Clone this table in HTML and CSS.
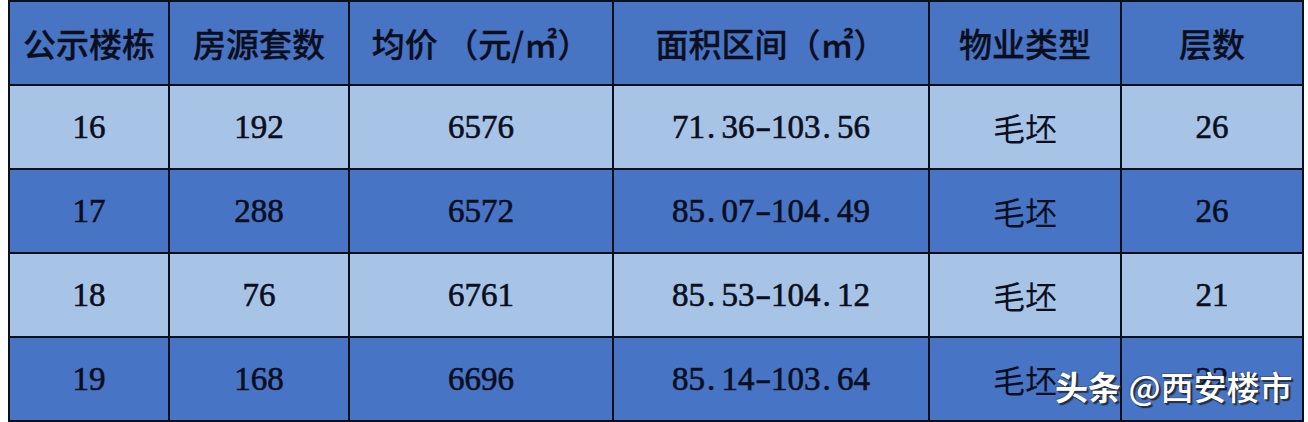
FILE: index.html
```html
<!DOCTYPE html>
<html lang="zh-CN">
<head>
<meta charset="utf-8">
<title>公示楼栋</title>
<link rel="stylesheet" href="styles.css">
</head>
<body>
<div class="wrap">
<table class="grid">
  <colgroup>
    <col class="c1"><col class="c2"><col class="c3"><col class="c4"><col class="c5"><col class="c6">
  </colgroup>
  <thead>
    <tr class="head">
      <th>公示楼栋</th>
      <th>房源套数</th>
      <th>均价 （元/㎡）</th>
      <th>面积区间（㎡）</th>
      <th>物业类型</th>
      <th>层数</th>
    </tr>
  </thead>
  <tbody>
    <tr class="light">
      <td class="num">16</td><td class="num">192</td><td class="num">6576</td>
      <td class="area">71<span class="p">.</span>36<span class="h">-</span>103<span class="p">.</span>56</td>
      <td class="cjk">毛坯</td><td class="num">26</td>
    </tr>
    <tr class="dark">
      <td class="num">17</td><td class="num">288</td><td class="num">6572</td>
      <td class="area">85<span class="p">.</span>07<span class="h">-</span>104<span class="p">.</span>49</td>
      <td class="cjk">毛坯</td><td class="num">26</td>
    </tr>
    <tr class="light">
      <td class="num">18</td><td class="num">76</td><td class="num">6761</td>
      <td class="area">85<span class="p">.</span>53<span class="h">-</span>104<span class="p">.</span>12</td>
      <td class="cjk">毛坯</td><td class="num">21</td>
    </tr>
    <tr class="dark">
      <td class="num">19</td><td class="num">168</td><td class="num">6696</td>
      <td class="area">85<span class="p">.</span>14<span class="h">-</span>103<span class="p">.</span>64</td>
      <td class="cjk">毛坯</td><td class="num">22</td>
    </tr>
  </tbody>
</table>
<div class="watermark"><span class="wm-a">头条</span> <span class="wm-b">@西安楼市</span></div>
</div>
</body>
</html>
```

FILE: styles.css
```css
html, body {
  margin: 0;
  padding: 0;
  background: #ffffff;
}
body {
  padding-left: 8px;
}
.wrap {
  position: relative;
  width: 1294px;
}
.grid {
  border-collapse: collapse;
  table-layout: fixed;
  width: 1294px;
  border: 2px solid #0d0f18;
}
.c1 { width: 160px; }
.c2 { width: 180px; }
.c3 { width: 264px; }
.c4 { width: 316px; }
.c5 { width: 192px; }
.c6 { width: 182px; }
.grid th, .grid td {
  border: 2px solid #0d0f18;
  height: 82px;
  padding: 0;
  text-align: center;
  vertical-align: middle;
  color: #0b0e1c;
}
.head th {
  background: #4874c4;
  font-family: "Noto Sans CJK SC", "Noto Sans", sans-serif;
  font-weight: 500;
  font-size: 33px;
  line-height: 1;
  -webkit-text-stroke: 0.3px #0b0e1c;
}
.light td { background: #a7c4e7; }
.dark td { background: #4774c4; }
.num, .area {
  font-family: "Liberation Serif", "DejaVu Serif", serif;
  font-size: 33px;
  line-height: 1;
  white-space: nowrap;
  -webkit-text-stroke: 0.6px #0b0e1c;
}
.area .p {
  display: inline-block;
  width: 0.5em;
  text-align: left;
  padding-left: 0.06em;
  box-sizing: border-box;
}
.area .h {
  display: inline-block;
  width: 0.5em;
  text-align: center;
  transform: scaleX(1.45);
}
.cjk {
  font-family: "Noto Sans CJK SC", "Noto Sans", sans-serif;
  font-size: 32px;
  font-weight: 400;
  line-height: 1;
}
.watermark {
  position: absolute;
  left: 1047px;
  top: 370px;
  font-family: "Noto Sans CJK SC", "Noto Sans", sans-serif;
  font-size: 33px;
  line-height: 1;
  color: #ffffff;
  white-space: nowrap;
  text-shadow: 1px 1px 0 #2e3340, 2px 2px 1px rgba(20, 24, 36, 0.8), -1px -1px 0 rgba(60, 64, 80, 0.45);
}
.wm-a { font-weight: 700; }
.wm-b { font-weight: 500; }
```
